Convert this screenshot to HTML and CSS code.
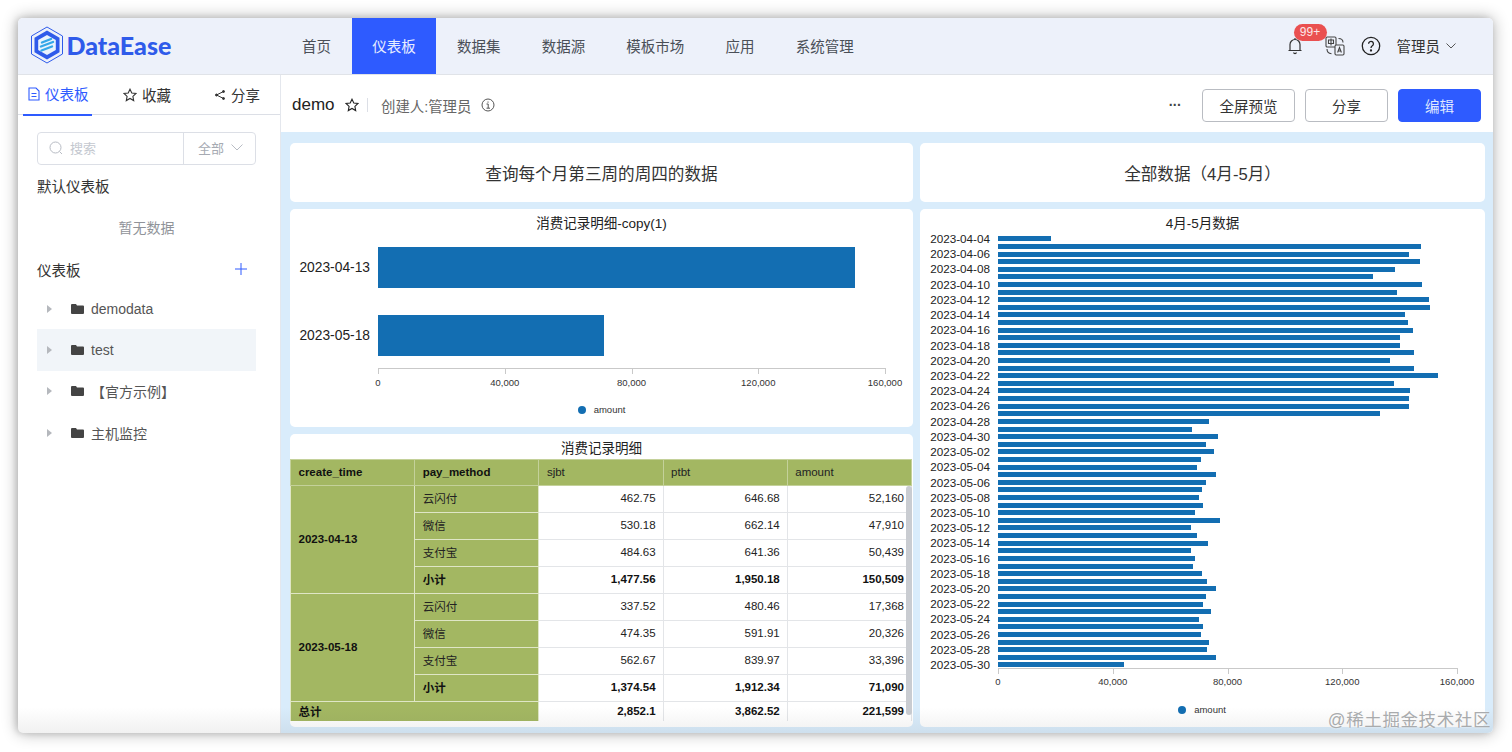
FILE: index.html
```html
<!DOCTYPE html>
<html lang="zh">
<head>
<meta charset="utf-8">
<title>DataEase</title>
<link rel="stylesheet" href="styles.css">
</head>
<body>
<div class="window">
  <header class="topnav">
    <div class="logo">
      <svg class="logo-mark" viewBox="0 0 34 38" width="34" height="38">
        <path d="M17 1 32.5 10v18L17 37 1.5 28V10z" fill="none" stroke="#2f5bea" stroke-width="1"/>
        <path d="M17 4.5 29.5 11.7v14.6L17 33.5 4.5 26.3V11.7z" fill="#2f5bea"/>
        <path d="M17 9 25.8 14v10L17 29 8.2 24V14z" fill="#eaf3fd"/>
        <path d="M12 16.5 21 13M11 20.5 23 16M11.5 24.5 22 20.5" stroke="#35a7e8" stroke-width="2.4" stroke-linecap="round" fill="none"/>
      </svg>
      <span class="logo-text">DataEase</span>
    </div>
    <nav class="menu">
      <a class="menu-item">首页</a>
      <a class="menu-item active">仪表板</a>
      <a class="menu-item">数据集</a>
      <a class="menu-item">数据源</a>
      <a class="menu-item">模板市场</a>
      <a class="menu-item">应用</a>
      <a class="menu-item">系统管理</a>
    </nav>
    <div class="tools">
      <span class="bell">
        <svg viewBox="0 0 16 18" width="16" height="18" fill="none" stroke="#333" stroke-width="1.2"><path d="M3 13.5V7.5a5 5 0 0 1 10 0v6zM1.5 13.5h13M6.5 15.5a1.6 1.6 0 0 0 3 0M8 1v1.5"/></svg>
        <span class="badge">99+</span>
      </span>
      <svg class="lang" viewBox="0 0 20 20" width="20" height="20" fill="none" stroke="#444" stroke-width="1.1"><rect x="1" y="1" width="10" height="10" rx="1.2" fill="#eef2fa"/><path d="M3.5 4h5v3.5h-5zM6 2.5v7"/><rect x="10" y="9" width="9" height="10" rx="1.2" fill="#eef2fa"/><path d="M12.6 16.5 14.5 11.500l1.900 5M13.300 15h2.400"/><path d="M13.500 2.500c2.500 0 4.500 1.500 4.500 4M2 13c0 2.500 1.500 4.500 4.500 4.800"/></svg>
      <svg class="help" viewBox="0 0 20 20" width="20" height="20" fill="none" stroke="#222" stroke-width="1.300"><circle cx="10" cy="10" r="8.700"/><path d="M7.600 7.800a2.400 2.400 0 1 1 3.700 2c-.9.600-1.300 1-1.300 2.200"/><circle cx="10" cy="14.500" r=".5" fill="#222"/></svg>
      <span class="user">管理员</span>
      <svg viewBox="0 0 10 6" width="10" height="6" fill="none" stroke="#555" stroke-width="1"><path d="M.5.500 5 5 9.500.500"/></svg>
    </div>
  </header>

  <div class="body">
    <aside class="side">
      <div class="tabs">
        <div class="tab on">
          <svg viewBox="0 0 12 14" width="12" height="14" fill="none" stroke="#2e5bff" stroke-width="1.100"><path d="M1 1h7l3 3v9H1zM3.500 6.500h5M3.500 9.500h5"/></svg>
          <span>仪表板</span>
        </div>
        <div class="tab">
          <svg viewBox="0 0 14 14" width="14" height="14" fill="none" stroke="#333" stroke-width="1.100"><path d="M7 1.200 8.800 5l4.200.5-3.100 2.900.8 4.200L7 10.500l-3.700 2.100.8-4.200L1 5.500 5.200 5z"/></svg>
          <span>收藏</span>
        </div>
        <div class="tab">
          <svg viewBox="0 0 12 12" width="12" height="12" fill="#333" stroke="#333" stroke-width="1"><path d="M9.500 2.500 2.500 6l7 3.500" fill="none"/><circle cx="9.500" cy="2.500" r="1"/><circle cx="2.500" cy="6" r="1"/><circle cx="9.500" cy="9.500" r="1"/></svg>
          <span>分享</span>
        </div>
      </div>
      <div class="side-body">
        <div class="search">
          <div class="search-in">
            <svg viewBox="0 0 14 14" width="14" height="14" fill="none" stroke="#b8bcc4" stroke-width="1"><circle cx="6.500" cy="6.500" r="5.500"/><path d="m10.500 10.500 2.500 2.500"/></svg>
            <span>搜索</span>
          </div>
          <div class="search-sel">
            <span>全部</span>
            <svg viewBox="0 0 12 7" width="12" height="7" fill="none" stroke="#b8bcc4" stroke-width="1"><path d="M.5.500 6 6 11.500.500"/></svg>
          </div>
        </div>
        <div class="sec-title default">默认仪表板</div>
        <div class="empty">暂无数据</div>
        <div class="sec-head">
          <span class="sec-title">仪表板</span>
          <svg viewBox="0 0 12 12" width="12" height="12" fill="none" stroke="#2e5bff" stroke-width="1"><path d="M6 0v12M0 6h12"/></svg>
        </div>
        <ul class="tree">
          <li class="node"><i class="caret"></i><svg class="folder" viewBox="0 0 13 10" width="13" height="10"><path d="M0 1a1 1 0 0 1 1-1h4l1 1.500h6a1 1 0 0 1 1 1V9a1 1 0 0 1-1 1H1a1 1 0 0 1-1-1z" fill="#444"/></svg><span>demodata</span></li>
          <li class="node hover"><i class="caret"></i><svg class="folder" viewBox="0 0 13 10" width="13" height="10"><path d="M0 1a1 1 0 0 1 1-1h4l1 1.500h6a1 1 0 0 1 1 1V9a1 1 0 0 1-1 1H1a1 1 0 0 1-1-1z" fill="#444"/></svg><span>test</span></li>
          <li class="node"><i class="caret"></i><svg class="folder" viewBox="0 0 13 10" width="13" height="10"><path d="M0 1a1 1 0 0 1 1-1h4l1 1.500h6a1 1 0 0 1 1 1V9a1 1 0 0 1-1 1H1a1 1 0 0 1-1-1z" fill="#444"/></svg><span>【官方示例】</span></li>
          <li class="node"><i class="caret"></i><svg class="folder" viewBox="0 0 13 10" width="13" height="10"><path d="M0 1a1 1 0 0 1 1-1h4l1 1.500h6a1 1 0 0 1 1 1V9a1 1 0 0 1-1 1H1a1 1 0 0 1-1-1z" fill="#444"/></svg><span>主机监控</span></li>
        </ul>
      </div>
    </aside>

    <main class="main">
      <div class="bar">
        <span class="doc-name">demo</span>
        <svg class="doc-star" viewBox="0 0 14 14" width="14" height="14" fill="none" stroke="#222" stroke-width="1.100"><path d="M7 1.200 8.800 5l4.200.5-3.100 2.900.8 4.200L7 10.500l-3.700 2.100.8-4.200L1 5.500 5.200 5z"/></svg>
        <span class="doc-sep"></span>
        <span class="doc-owner">创建人:管理员</span>
        <svg viewBox="0 0 14 14" width="14" height="14" fill="none" stroke="#555" stroke-width="1"><circle cx="7" cy="7" r="6"/><path d="M5.500 6H7.200v4M5.500 10.200h3.500M7 3.500v1.200"/></svg>
        <span class="spacer"></span>
        <span class="more">···</span>
        <button class="btn wide">全屏预览</button>
        <button class="btn">分享</button>
        <button class="btn primary">编辑</button>
      </div>

      <div class="board">
        <section class="card head-card">查询每个月第三周的周四的数据</section>
        <section class="card head-card">全部数据（4月-5月）</section>

        <section class="card small-chart">
          <h3 class="chart-title">消费记录明细-copy(1)</h3>
          <div class="rows big-rows">
            <div class="row"><span class="lab">2023-04-13</span><i class="b" style="width:477px"></i></div>
            <div class="row"><span class="lab">2023-05-18</span><i class="b" style="width:226px"></i></div>
          </div>
          <div class="axis">
            <span class="tick"><em>0</em></span><span class="tick"><em>40,000</em></span><span class="tick"><em>80,000</em></span><span class="tick"><em>120,000</em></span><span class="tick"><em>160,000</em></span>
          </div>
          <div class="legend"><i class="dot"></i>amount</div>
        </section>

        <section class="card tall-chart">
          <h3 class="chart-title">4月-5月数据</h3>
          <div class="rows thin-rows">
            <div class="row"><span class="lab">2023-04-04</span><i class="b" style="width:53px"></i></div>
            <div class="row"><span class="lab"></span><i class="b" style="width:423px"></i></div>
            <div class="row"><span class="lab">2023-04-06</span><i class="b" style="width:411px"></i></div>
            <div class="row"><span class="lab"></span><i class="b" style="width:422px"></i></div>
            <div class="row"><span class="lab">2023-04-08</span><i class="b" style="width:397px"></i></div>
            <div class="row"><span class="lab"></span><i class="b" style="width:375px"></i></div>
            <div class="row"><span class="lab">2023-04-10</span><i class="b" style="width:424px"></i></div>
            <div class="row"><span class="lab"></span><i class="b" style="width:399px"></i></div>
            <div class="row"><span class="lab">2023-04-12</span><i class="b" style="width:431px"></i></div>
            <div class="row"><span class="lab"></span><i class="b" style="width:432px"></i></div>
            <div class="row"><span class="lab">2023-04-14</span><i class="b" style="width:407px"></i></div>
            <div class="row"><span class="lab"></span><i class="b" style="width:410px"></i></div>
            <div class="row"><span class="lab">2023-04-16</span><i class="b" style="width:415px"></i></div>
            <div class="row"><span class="lab"></span><i class="b" style="width:402px"></i></div>
            <div class="row"><span class="lab">2023-04-18</span><i class="b" style="width:402px"></i></div>
            <div class="row"><span class="lab"></span><i class="b" style="width:416px"></i></div>
            <div class="row"><span class="lab">2023-04-20</span><i class="b" style="width:392px"></i></div>
            <div class="row"><span class="lab"></span><i class="b" style="width:416px"></i></div>
            <div class="row"><span class="lab">2023-04-22</span><i class="b" style="width:440px"></i></div>
            <div class="row"><span class="lab"></span><i class="b" style="width:396px"></i></div>
            <div class="row"><span class="lab">2023-04-24</span><i class="b" style="width:412px"></i></div>
            <div class="row"><span class="lab"></span><i class="b" style="width:411px"></i></div>
            <div class="row"><span class="lab">2023-04-26</span><i class="b" style="width:411px"></i></div>
            <div class="row"><span class="lab"></span><i class="b" style="width:382px"></i></div>
            <div class="row"><span class="lab">2023-04-28</span><i class="b" style="width:211px"></i></div>
            <div class="row"><span class="lab"></span><i class="b" style="width:194px"></i></div>
            <div class="row"><span class="lab">2023-04-30</span><i class="b" style="width:220px"></i></div>
            <div class="row"><span class="lab"></span><i class="b" style="width:208px"></i></div>
            <div class="row"><span class="lab">2023-05-02</span><i class="b" style="width:216px"></i></div>
            <div class="row"><span class="lab"></span><i class="b" style="width:203px"></i></div>
            <div class="row"><span class="lab">2023-05-04</span><i class="b" style="width:199px"></i></div>
            <div class="row"><span class="lab"></span><i class="b" style="width:218px"></i></div>
            <div class="row"><span class="lab">2023-05-06</span><i class="b" style="width:208px"></i></div>
            <div class="row"><span class="lab"></span><i class="b" style="width:204px"></i></div>
            <div class="row"><span class="lab">2023-05-08</span><i class="b" style="width:201px"></i></div>
            <div class="row"><span class="lab"></span><i class="b" style="width:205px"></i></div>
            <div class="row"><span class="lab">2023-05-10</span><i class="b" style="width:197px"></i></div>
            <div class="row"><span class="lab"></span><i class="b" style="width:222px"></i></div>
            <div class="row"><span class="lab">2023-05-12</span><i class="b" style="width:193px"></i></div>
            <div class="row"><span class="lab"></span><i class="b" style="width:199px"></i></div>
            <div class="row"><span class="lab">2023-05-14</span><i class="b" style="width:210px"></i></div>
            <div class="row"><span class="lab"></span><i class="b" style="width:193px"></i></div>
            <div class="row"><span class="lab">2023-05-16</span><i class="b" style="width:197px"></i></div>
            <div class="row"><span class="lab"></span><i class="b" style="width:195px"></i></div>
            <div class="row"><span class="lab">2023-05-18</span><i class="b" style="width:204px"></i></div>
            <div class="row"><span class="lab"></span><i class="b" style="width:209px"></i></div>
            <div class="row"><span class="lab">2023-05-20</span><i class="b" style="width:218px"></i></div>
            <div class="row"><span class="lab"></span><i class="b" style="width:208px"></i></div>
            <div class="row"><span class="lab">2023-05-22</span><i class="b" style="width:205px"></i></div>
            <div class="row"><span class="lab"></span><i class="b" style="width:213px"></i></div>
            <div class="row"><span class="lab">2023-05-24</span><i class="b" style="width:201px"></i></div>
            <div class="row"><span class="lab"></span><i class="b" style="width:205px"></i></div>
            <div class="row"><span class="lab">2023-05-26</span><i class="b" style="width:203px"></i></div>
            <div class="row"><span class="lab"></span><i class="b" style="width:211px"></i></div>
            <div class="row"><span class="lab">2023-05-28</span><i class="b" style="width:209px"></i></div>
            <div class="row"><span class="lab"></span><i class="b" style="width:218px"></i></div>
            <div class="row"><span class="lab">2023-05-30</span><i class="b" style="width:126px"></i></div>
          </div>
          <div class="axis">
            <span class="tick"><em>0</em></span><span class="tick"><em>40,000</em></span><span class="tick"><em>80,000</em></span><span class="tick"><em>120,000</em></span><span class="tick"><em>160,000</em></span>
          </div>
          <div class="legend"><i class="dot"></i>amount</div>
        </section>

        <section class="card table-card">
          <h3 class="chart-title">消费记录明细</h3>
          <div class="table-wrap">
            <table class="grid">
              <thead>
                <tr><th class="strong">create_time</th><th class="strong">pay_method</th><th>sjbt</th><th>ptbt</th><th>amount</th></tr>
              </thead>
              <tbody>
                <tr><td class="dim strong" rowspan="4">2023-04-13</td><td class="dim">云闪付</td><td>462.75</td><td>646.68</td><td>52,160</td></tr>
                <tr><td class="dim">微信</td><td>530.18</td><td>662.14</td><td>47,910</td></tr>
                <tr><td class="dim">支付宝</td><td>484.63</td><td>641.36</td><td>50,439</td></tr>
                <tr class="sub"><td class="dim">小计</td><td>1,477.56</td><td>1,950.18</td><td>150,509</td></tr>
                <tr><td class="dim strong" rowspan="4">2023-05-18</td><td class="dim">云闪付</td><td>337.52</td><td>480.46</td><td>17,368</td></tr>
                <tr><td class="dim">微信</td><td>474.35</td><td>591.91</td><td>20,326</td></tr>
                <tr><td class="dim">支付宝</td><td>562.67</td><td>839.97</td><td>33,396</td></tr>
                <tr class="sub"><td class="dim">小计</td><td>1,374.54</td><td>1,912.34</td><td>71,090</td></tr>
                <tr class="sub total"><td class="dim" colspan="2">总计</td><td>2,852.1</td><td>3,862.52</td><td>221,599</td></tr>
              </tbody>
            </table>
            <span class="scroll"></span>
          </div>
        </section>
      </div>
    </main>
  </div>
</div>
<div class="mark">@稀土掘金技术社区</div>
</body>
</html>
```
FILE: styles.css
```css
* { box-sizing: border-box; }
html, body { margin: 0; height: 100%; }
body {
  background: #fff;
  overflow: hidden;
  font-family: "Liberation Sans", "Noto Sans CJK SC", sans-serif;
  color: #333;
  padding: 18px 19px 19px 18px;
}
.window {
  position: relative;
  height: 715px;
  display: flex;
  flex-direction: column;
  border-radius: 5px;
  overflow: hidden;
  background: #fff;
  box-shadow: 0 0 16px rgba(0, 0, 0, .32), -2px 0 6px rgba(0, 0, 0, .12);
}
.window::after {
  content: "";
  position: absolute;
  left: 0;
  right: 0;
  bottom: 0;
  height: 26px;
  background: linear-gradient(rgba(0, 0, 0, 0), rgba(60, 60, 60, .07));
  pointer-events: none;
}

/* top navigation */
.topnav {
  flex: 0 0 57px;
  display: flex;
  align-items: stretch;
  background: #edf1fa;
  border-bottom: 1px solid #e0e3e8;
}
.logo { width: 263.500px; display: flex; align-items: center; gap: 2.500px; padding: 0 0 2px 12px; }
.logo-text {
  font-family: "Lato", "Liberation Sans", sans-serif;
  font-weight: 900;
  font-size: 25px;
  color: #2f5bea;
}
.menu { display: flex; }
.menu-item {
  display: flex;
  align-items: center;
  padding: 0 20.600px 2px;
  font-size: 14.500px;
  color: #4a4f57;
}
.menu-item.active { background: #2e5bff; color: #e8eeff; }
.tools { margin-left: auto; display: flex; align-items: center; padding: 0 37px 1px 0; }
.bell { position: relative; display: flex; margin-right: 22px; }
.badge {
  position: absolute;
  left: 7px;
  top: -13px;
  width: 33px;
  height: 17px;
  border-radius: 9px;
  background: #ea5050;
  color: #fbe7e7;
  font-size: 12px;
  line-height: 17px;
  text-align: center;
}
.lang { margin-right: 16px; }
.help { margin-right: 16px; }
.user { font-size: 14.500px; color: #333; margin-right: 6px; padding-bottom: 1px; }

.body { flex: 1; display: flex; min-height: 0; }

/* sidebar */
.side { flex: 0 0 263px; border-right: 1px solid #e4e7ed; display: flex; flex-direction: column; }
.tabs {
  height: 40px;
  display: flex;
  border-bottom: 1px solid #dcdfe6;
  padding-left: 5px;
  font-size: 14.500px;
}
.tab { display: flex; align-items: center; gap: 5px; color: #333; height: 41px; padding-bottom: 2px; }
.tab:nth-child(2) { margin-left: 31px; width: 91px; }
.tab.on { color: #2e5bff; width: 69px; border-bottom: 2px solid #2e5bff; padding-left: 5px; }
.side-body { padding: 17px 24px 0 19px; }
.search {
  height: 33px;
  display: flex;
  border: 1px solid #dcdfe6;
  border-radius: 4px;
  font-size: 13px;
}
.search-in { flex: 1; display: flex; align-items: center; gap: 7px; padding: 0 0 2px 11px; color: #c4c8cf; border-right: 1px solid #dcdfe6; }
.search-sel { width: 71px; display: flex; align-items: center; gap: 7px; padding: 0 0 2px 14px; color: #a6aab2; }
.sec-title { font-size: 14.500px; color: #333; }
.default { margin-top: 12px; line-height: 20px; }
.empty { margin-top: 21px; text-align: center; font-size: 14px; line-height: 20px; color: #909399; }
.sec-head { margin-top: 21px; height: 20px; display: flex; justify-content: space-between; align-items: center; padding-right: 9px; }
.tree { list-style: none; margin: 9px 0 0; padding: 0; }
.node { height: 41.300px; display: flex; align-items: center; font-size: 14px; color: #555; }
.node.hover { background: #f1f5f9; }
.caret {
  width: 0;
  height: 0;
  margin-left: 10px;
  border-left: 5px solid #b5b8bd;
  border-top: 4px solid transparent;
  border-bottom: 4px solid transparent;
}
.folder { margin: 0 7px 0 19px; }

/* main */
.main { flex: 1; display: flex; flex-direction: column; min-width: 0; background: #d9ecfb; }
.bar {
  flex: 0 0 57px;
  display: flex;
  align-items: center;
  background: #fff;
  padding: 3px 12px 0 11px;
}
.doc-name { font-size: 17px; color: #222; }
.doc-star { margin: 0 8px 0 10px; }
.doc-sep { width: 1px; height: 14px; background: #dcdfe6; }
.doc-owner { font-size: 14.400px; color: #666; margin: 0 10px 0 13.500px; }
.spacer { flex: 1; }
.more { font-size: 14px; font-weight: 700; color: #444; margin-right: 21px; letter-spacing: -.6px; }
.btn {
  width: 83px;
  height: 33px;
  margin-left: 10px;
  border: 1px solid #b9bcc2;
  border-radius: 4px;
  background: #fff;
  color: #333;
  font: 14.500px "Liberation Sans", "Noto Sans CJK SC", sans-serif;
  padding: 0;
}
.btn.wide { width: 93px; margin-left: 0; }
.btn.primary { background: #2e5bff; border-color: #2e5bff; color: #dfe7ff; }

.board {
  flex: 1;
  display: grid;
  grid-template-columns: 623px 565px;
  grid-template-rows: 59px 218px 293px;
  gap: 7px;
  padding: 11px 8px 0 9px;
}
.card { background: #fff; border-radius: 5px; overflow: hidden; }
.head-card { display: flex; align-items: center; justify-content: center; font-size: 16.600px; color: #333; }
.chart-title { margin: 0; font-weight: 400; font-size: 13.500px; line-height: 16px; text-align: center; color: #222; }

/* bar charts */
.small-chart { padding: 7px 0 0; }
.tall-chart { grid-column: 2; grid-row: 2 / span 2; padding: 7px 0 0; }
.rows { display: flex; flex-direction: column; }
.row { display: flex; align-items: center; }
.lab { text-align: right; padding-right: 8px; color: #222; white-space: nowrap; }
.b { display: block; background: #136eb2; }
.big-rows { margin-top: 15px; gap: 27px; }
.big-rows .row { height: 41px; }
.big-rows .lab { width: 88px; font-size: 13.800px; }
.big-rows .b { height: 41px; }
.thin-rows { margin-top: 3px; }
.thin-rows .row { height: 7.620px; }
.thin-rows .lab { width: 78px; font-size: 11.700px; line-height: 7.620px; }
.thin-rows .b { height: 5px; }
.axis { position: relative; display: flex; justify-content: space-between; border-top: 1px solid #c9c9c9; }
.small-chart .axis { margin: 12px 27px 0 88px; }
.tall-chart .axis { margin: 0 27px 0 78px; top: -1px; }
.tick { width: 1px; height: 5px; background: #c9c9c9; position: relative; }
.tick em {
  position: absolute;
  left: 0;
  top: 8px;
  transform: translateX(-50%);
  font-style: normal;
  font-size: 9.500px;
  line-height: 12px;
  white-space: nowrap;
  color: #333;
}
.tall-chart .tick em { top: 7px; }
.legend { display: flex; align-items: center; justify-content: center; gap: 8px; font-size: 9.500px; line-height: 12px; color: #333; }
.small-chart .legend { margin-top: 30px; }
.tall-chart .legend { margin-top: 29px; padding-right: 1px; }
.dot { width: 8px; height: 8px; border-radius: 50%; background: #136eb2; }

/* table */
.table-card { grid-column: 1; grid-row: 3; padding-top: 7px; }
.table-wrap { position: relative; margin-top: 2px; height: 262px; overflow: hidden; }
.grid { border-collapse: collapse; table-layout: fixed; width: 622px; font-size: 11.500px; color: #222; }
.grid th, .grid td { padding: 0 7px 2px 7.500px; height: 27px; border: 1px solid #e3e5e8; }
.grid th { height: 26px; background: #a3b762; text-align: left; font-weight: 400; border-color: #c4d19a; }
.grid td { text-align: right; }
.grid .dim { background: #a3b762; text-align: left; border-color: #dfe6c6; }
.grid th.strong, .grid .strong { font-weight: 700; color: #111; }
.sub td { font-weight: 700; color: #111; }
.total td { height: 21px; }
.scroll { position: absolute; right: 1px; top: 27px; width: 6px; height: 229px; border-radius: 3px; background: #c9ccd1; }

.mark {
  position: absolute;
  right: 21px;
  top: 710px;
  font-size: 17.500px;
  line-height: 21px;
  color: #a9abad;
  letter-spacing: .6px;
  text-shadow: 0 0 2px #fff;
}
```
